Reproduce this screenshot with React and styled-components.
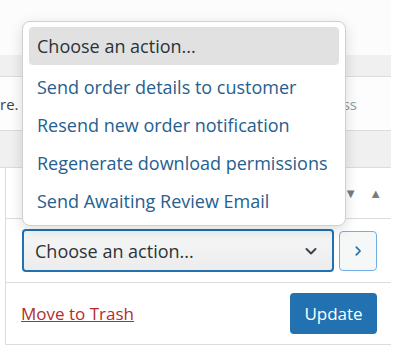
import React from "react";
import styled, { createGlobalStyle } from "styled-components";

const GlobalStyle = createGlobalStyle`
  html, body {
    margin: 0;
    padding: 0;
    background: #ffffff;
  }
  body {
    font-family: "Open Sans", "Noto Sans", sans-serif;
  }
`;

const Page = styled.div`
  position: relative;
  width: 417px;
  height: 352px;
  overflow: hidden;
  background: #ffffff;
`;

const Column = styled.div`
  width: 391px;
  display: flex;
  flex-direction: column;
`;

const Spacer = styled.div`
  height: ${(p) => p.h}px;
  background: #fcfcfc;
`;

const Band = styled.div`
  height: ${(p) => p.h}px;
  background: #f0f0f1;
  border-bottom: 1px solid #dcdcde;
`;

const NoticeRow = styled.div`
  height: 53px;
  display: flex;
  align-items: center;
  justify-content: space-between;
  padding-right: 34px;
  font-size: 15px;
  background: #fdfdfd;
  border-bottom: 1px solid #dcdcde;
`;

const NoticeText = styled.span`
  color: ${(p) => p.color};
`;

const Box = styled.div`
  margin-left: 5px;
  height: 176px;
  display: flex;
  flex-direction: column;
  background: #ffffff;
  border-left: 1px solid #dcdcde;
  border-bottom: 1px solid #dcdcde;
`;

const BoxHeader = styled.div`
  height: 50px;
  display: flex;
  align-items: center;
  justify-content: flex-end;
  gap: 12px;
  padding-right: 9px;
  border-bottom: 1px solid #dcdcde;
  color: #787c82;
  font-size: 13px;
`;

const ActionRow = styled.div`
  height: 63px;
  display: flex;
  align-items: center;
  gap: 5px;
  padding-left: 16px;
  border-bottom: 1px solid #dcdcde;
`;

const Select = styled.div`
  box-sizing: border-box;
  width: 312px;
  height: 43px;
  display: flex;
  align-items: center;
  justify-content: space-between;
  padding: 0 14px 0 11px;
  border: 2px solid #2271b1;
  border-radius: 4px;
  background: linear-gradient(#f6f7f7, #ececec);
  color: #2c3338;
  font-size: 18px;
`;

const GoButton = styled.div`
  box-sizing: border-box;
  width: 38px;
  height: 40px;
  display: flex;
  align-items: center;
  justify-content: center;
  border: 1px solid #72aee6;
  border-radius: 4px;
  background: #f6f7f7;
  color: #2271b1;
`;

const Footer = styled.div`
  flex: 1;
  display: flex;
  align-items: center;
  justify-content: space-between;
  padding: 0 14px 0 15px;
`;

const TrashLink = styled.a`
  color: #b32d2e;
  font-size: 17px;
  text-decoration: underline;
  cursor: pointer;
`;

const UpdateButton = styled.button`
  width: 87px;
  height: 41px;
  border: none;
  border-radius: 4px;
  background: #2271b1;
  color: #ffffff;
  font-family: inherit;
  font-size: 17px;
`;

const Menu = styled.div`
  position: absolute;
  left: 22px;
  top: 21px;
  box-sizing: border-box;
  width: 324px;
  height: 205px;
  padding: 5px 6px;
  display: flex;
  flex-direction: column;
  background: #ffffff;
  border: 1px solid #d0d0d0;
  border-radius: 8px;
  box-shadow: 0 4px 14px rgba(0, 0, 0, 0.14);
`;

const Option = styled.div`
  flex: none;
  height: 38px;
  margin-bottom: ${(p) => (p.selected ? 3 : 0)}px;
  display: flex;
  align-items: center;
  padding-left: 8px;
  border-radius: 4px;
  font-size: 18px;
  color: ${(p) => (p.selected ? "#2c3338" : "#25608f")};
  background: ${(p) => (p.selected ? "#e1e1e1" : "transparent")};
`;

const Chevron = ({ dir = "down", size = 14, color = "#3c434a" }) => (
  <svg width={size} height={size} viewBox="0 0 14 14" fill="none">
    <path
      d={dir === "down" ? "M2.5 5 L7 9.5 L11.5 5" : "M5 2.5 L9.5 7 L5 11.5"}
      stroke={color}
      strokeWidth="2"
      strokeLinecap="round"
      strokeLinejoin="round"
    />
  </svg>
);

const options = [
  "Choose an action...",
  "Send order details to customer",
  "Resend new order notification",
  "Regenerate download permissions",
  "Send Awaiting Review Email",
];

export default function App() {
  return (
    <Page>
      <GlobalStyle />
      <Column>
        <Spacer h={55} />
        <Band h={21} />
        <NoticeRow>
          <NoticeText color="#3c434a">re.</NoticeText>
          <NoticeText color="#8c9aa6">ss</NoticeText>
        </NoticeRow>
        <Band h={36} />
        <Box>
          <BoxHeader>
            <span>▼</span>
            <span>▲</span>
          </BoxHeader>
          <ActionRow>
            <Select>
              <span>Choose an action...</span>
              <Chevron dir="down" />
            </Select>
            <GoButton>
              <Chevron dir="right" size={12} color="#2271b1" />
            </GoButton>
          </ActionRow>
          <Footer>
            <TrashLink>Move to Trash</TrashLink>
            <UpdateButton>Update</UpdateButton>
          </Footer>
        </Box>
      </Column>
      <Menu>
        {options.map((o, i) => (
          <Option key={o} selected={i === 0}>
            {o}
          </Option>
        ))}
      </Menu>
    </Page>
  );
}
